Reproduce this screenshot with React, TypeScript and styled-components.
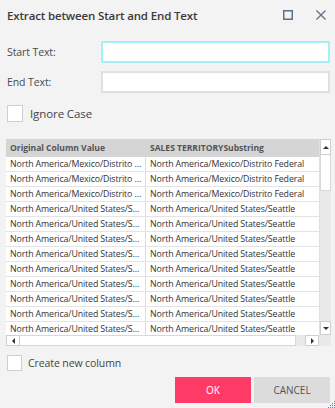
import React from "react";
import styled, { createGlobalStyle } from "styled-components";

const Global = createGlobalStyle`
  html, body { margin: 0; padding: 0; background: #f3f3f3; }
  * { box-sizing: border-box; }
`;

const FONT = `"Open Sans", "Noto Sans", sans-serif`;

const Dialog = styled.div`
  width: 335px;
  height: 408px;
  background: #f3f3f3;
  font-family: ${FONT};
  position: relative;
  display: flex;
  flex-direction: column;
  overflow: hidden;
`;

const TitleBar = styled.div`
  height: 30px;
  display: flex;
  align-items: center;
  padding: 0 9px 0 7px;
`;

const Title = styled.div`
  flex: 1;
  font-size: 11.5px;
  font-weight: 600;
  color: #3a3a3a;
  letter-spacing: -0.15px;
`;

const IconButton = styled.div`
  width: 11px;
  height: 11px;
  margin-left: 22px;
  display: flex;
  align-items: center;
  justify-content: center;
`;

const Form = styled.div`
  display: grid;
  grid-template-columns: 94px 229px;
  row-gap: 8px;
  padding: 11px 0 0 7px;
  align-items: center;
`;

const Label = styled.label`
  font-size: 10.5px;
  color: #4a4a4a;
  letter-spacing: -0.1px;
`;

const TextInput = styled.input<{ $focused?: boolean }>`
  height: 22px;
  width: 229px;
  border: 2px solid ${(p) => (p.$focused ? "#a8eef6" : "#e0e0e0")};
  background: #fff;
  outline: none;
  padding: 0 4px;
  font-family: ${FONT};
`;

const CheckRow = styled.label<{ $top: number; $gap: number }>`
  display: flex;
  align-items: center;
  gap: ${(p) => p.$gap}px;
  margin: ${(p) => p.$top}px 0 0 7px;
  color: #444;
`;

const Box = styled.span<{ $size: number }>`
  width: ${(p) => p.$size}px;
  height: ${(p) => p.$size + 1}px;
  background: #fff;
  border: 1px solid #cfcfcf;
`;

const CheckText = styled.span<{ $fs: number }>`
  font-size: ${(p) => p.$fs}px;
  letter-spacing: -0.1px;
`;

const Grid = styled.div`
  margin: 17px 0 0 6px;
  width: 325px;
  height: 207px;
  display: grid;
  grid-template-columns: 313px 12px;
  grid-template-rows: 196px 11px;
  background: #e9e9e9;
`;

const GridBody = styled.div`
  overflow: hidden;
  display: flex;
  flex-direction: column;
`;

const HeaderRow = styled.div`
  height: 18px;
  flex: none;
  display: grid;
  grid-template-columns: 140px 173px;
  background: #d5d5d5;
`;

const HeaderCell = styled.div`
  font-size: 8.6px;
  font-weight: 700;
  color: #555;
  padding-left: 4px;
  line-height: 18px;
  white-space: nowrap;
  overflow: hidden;
  letter-spacing: -0.05px;
`;

const Row = styled.div`
  height: 15px;
  flex: none;
  display: grid;
  grid-template-columns: 140px 173px;
  border-bottom: 1px solid #e4e4e4;
`;

const Cell = styled.div<{ $divider?: boolean }>`
  background: #fff;
  font-size: 8.8px;
  color: #333;
  line-height: 14px;
  padding-left: 4px;
  padding-right: 1px;
  letter-spacing: -0.12px;
  white-space: nowrap;
  overflow: hidden;
  text-overflow: ellipsis;
  border-right: ${(p) => (p.$divider ? "1px solid #dedede" : "none")};
`;

const VScroll = styled.div`
  display: flex;
  flex-direction: column;
  background: #e9e9e9;
  border-left: 1px solid #e0e0e0;
`;

const ScrollBtn = styled.div<{ $h: number }>`
  height: ${(p) => p.$h}px;
  width: 100%;
  flex: none;
  background: #fff;
  border: 1px solid #cfcfcf;
  display: flex;
  align-items: center;
  justify-content: center;
`;

const VThumb = styled.div`
  height: 36px;
  flex: none;
  background: #fff;
  border: 1px solid #d8d8d8;
  border-top: none;
`;

const Spacer = styled.div`
  flex: 1;
`;

const HScroll = styled.div`
  display: flex;
  background: #e9e9e9;
`;

const HBtn = styled.div`
  width: 14px;
  height: 11px;
  flex: none;
  background: #fff;
  border: 1px solid #cfcfcf;
  display: flex;
  align-items: center;
  justify-content: center;
`;

const HThumb = styled.div`
  width: 276px;
  height: 11px;
  flex: none;
  background: #fff;
  border: 1px solid #d8d8d8;
  border-left: none;
`;

const Corner = styled.div`
  background: #e9e9e9;
`;

const Buttons = styled.div`
  display: flex;
  justify-content: flex-end;
  gap: 3px;
  padding-right: 5px;
  margin-top: 6px;
`;

const Button = styled.button<{ $primary?: boolean }>`
  width: 76px;
  height: 26px;
  border: none;
  font-family: ${FONT};
  font-size: 10px;
  background: ${(p) => (p.$primary ? "#ff3a66" : "#dcdcdc")};
  color: ${(p) => (p.$primary ? "#fff" : "#555")};
  padding: 0;
`;

const Grip = styled.svg`
  position: absolute;
  right: 0;
  bottom: 0;
`;

const Tri = ({ dir }: { dir: "up" | "down" | "left" | "right" }) => {
  const pts = {
    up: "0,4 3,1 6,4",
    down: "0,1 3,4 6,1",
    left: "4,0 1,3 4,6",
    right: "1,0 4,3 1,6",
  }[dir];
  const w = dir === "up" || dir === "down" ? 6 : 5;
  const h = dir === "up" || dir === "down" ? 5 : 6;
  return (
    <svg width={w} height={h} viewBox={`0 0 ${w} ${h}`}>
      <polygon points={pts} fill="#333" />
    </svg>
  );
};

const rows: [string, string][] = [
  ...Array(3).fill([
    "North America/Mexico/Distrito Federal",
    "North America/Mexico/Distrito Federal",
  ]),
  ...Array(9).fill([
    "North America/United States/Seattle",
    "North America/United States/Seattle",
  ]),
];

export default function App() {
  return (
    <>
      <Global />
      <Dialog>
        <TitleBar>
          <Title>Extract between Start and End Text</Title>
          <IconButton>
            <svg width="10" height="10" viewBox="0 0 10 10">
              <rect x="0.75" y="0.75" width="8.5" height="8.5" fill="none" stroke="#5b7089" strokeWidth="1.5" />
            </svg>
          </IconButton>
          <IconButton>
            <svg width="10" height="10" viewBox="0 0 10 10">
              <path d="M0.5 0.5 L9.5 9.5 M9.5 0.5 L0.5 9.5" stroke="#5b7089" strokeWidth="1.3" />
            </svg>
          </IconButton>
        </TitleBar>
        <Form>
          <Label>Start Text:</Label>
          <TextInput $focused />
          <Label>End Text:</Label>
          <TextInput />
        </Form>
        <CheckRow $top={12} $gap={7}>
          <Box $size={16} />
          <CheckText $fs={11.5}>Ignore Case</CheckText>
        </CheckRow>
        <Grid>
          <GridBody>
            <HeaderRow>
              <HeaderCell>Original Column Value</HeaderCell>
              <HeaderCell>SALES TERRITORYSubstring</HeaderCell>
            </HeaderRow>
            {rows.map((r, i) => (
              <Row key={i}>
                <Cell $divider>{r[0]}</Cell>
                <Cell>{r[1]}</Cell>
              </Row>
            ))}
          </GridBody>
          <VScroll>
            <ScrollBtn $h={16}>
              <Tri dir="up" />
            </ScrollBtn>
            <VThumb />
            <Spacer />
            <ScrollBtn $h={14}>
              <Tri dir="down" />
            </ScrollBtn>
          </VScroll>
          <HScroll>
            <HBtn>
              <Tri dir="left" />
            </HBtn>
            <HThumb />
            <Spacer />
            <HBtn>
              <Tri dir="right" />
            </HBtn>
          </HScroll>
          <Corner />
        </Grid>
        <CheckRow $top={9} $gap={6}>
          <Box $size={15} />
          <CheckText $fs={10.5}>Create new column</CheckText>
        </CheckRow>
        <Buttons>
          <Button $primary>OK</Button>
          <Button>CANCEL</Button>
        </Buttons>
        <Grip width="8" height="7" viewBox="0 0 8 7">
          {[
            [7, 0], [5, 2], [7, 2], [3, 4], [5, 4], [7, 4], [1, 6], [3, 6], [5, 6], [7, 6],
          ].map(([x, y], i) => (
            <rect key={i} x={x} y={y} width="1" height="1" fill="#6b7f99" />
          ))}
        </Grip>
      </Dialog>
    </>
  );
}
